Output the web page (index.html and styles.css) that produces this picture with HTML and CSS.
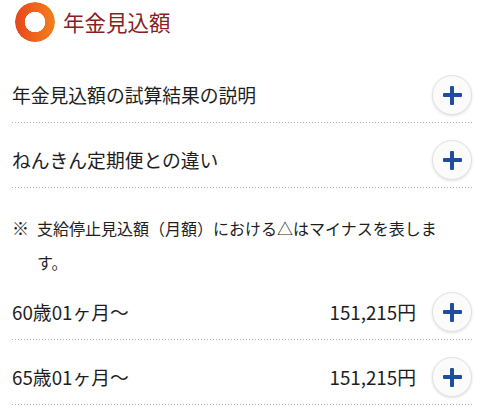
FILE: index.html
```html
<!DOCTYPE html>
<html lang="ja">
<head>
<meta charset="utf-8">
<link rel="stylesheet" href="styles.css">
</head>
<body>
<div class="page">
  <div class="header">
    <span class="ring"></span>
    <h1 class="title">年金見込額</h1>
  </div>
  <div class="row first">
    <span class="label">年金見込額の試算結果の説明</span>
    <span class="btn"><span class="plus"></span></span>
  </div>
  <div class="row">
    <span class="label">ねんきん定期便との違い</span>
    <span class="btn"><span class="plus"></span></span>
  </div>
  <p class="note"><span class="mark">※</span>支給停止見込額（月額）における△はマイナスを表します。</p>
  <div class="row amount-row">
    <span class="label">60歳01ヶ月〜</span>
    <span class="amount">151,215円</span>
    <span class="btn"><span class="plus"></span></span>
  </div>
  <div class="row">
    <span class="label">65歳01ヶ月〜</span>
    <span class="amount">151,215円</span>
    <span class="btn"><span class="plus"></span></span>
  </div>
</div>
</body>
</html>
```
FILE: styles.css
```css
html, body {
  margin: 0;
  padding: 0;
  background: #ffffff;
}
body {
  font-family: "Noto Sans CJK JP", "Noto Sans", sans-serif;
  color: #1e1e1e;
}
.page {
  display: flex;
  flex-direction: column;
  width: 480px;
  height: 408px;
  overflow: hidden;
  padding: 0 8px 0 12px;
  box-sizing: border-box;
}
.header {
  display: flex;
  align-items: center;
  height: 44px;
  padding-left: 3px;
  margin-bottom: 14px;
  flex: none;
}
.ring {
  width: 40px;
  height: 40px;
  border-radius: 50%;
  background: linear-gradient(90deg, #e5461d 0%, #ef6a1c 60%, #f07f1f 100%);
  -webkit-mask: radial-gradient(circle, transparent 10px, #000 10.5px);
  mask: radial-gradient(circle, transparent 10px, #000 10.5px);
  flex: none;
}
.title {
  margin: 0 0 0 8px;
  font-size: 21.5px;
  font-weight: 400;
  color: #8a1e22;
  line-height: 1;
}
.row {
  display: flex;
  align-items: center;
  flex: none;
  padding: 7px 0 8px 0;
  margin-top: 10px;
  background-image: linear-gradient(90deg, #b8b8b8 1px, transparent 1px);
  background-size: 3px 1px;
  background-repeat: repeat-x;
  background-position: left bottom;
}
.label {
  flex: 1;
  font-size: 18.8px;
  line-height: 1;
}
.amount {
  font-size: 18.8px;
  line-height: 1;
  margin-right: 16px;
}
.btn {
  position: relative;
  width: 40px;
  height: 40px;
  border-radius: 50%;
  background: #fbfbfb;
  border: 1px solid #e2e2e2;
  box-shadow: 0 1px 3px rgba(0,0,0,0.12);
  box-sizing: border-box;
  flex: none;
  display: flex;
  align-items: center;
  justify-content: center;
}
.plus {
  position: relative;
  width: 19px;
  height: 19px;
}
.plus::before, .plus::after {
  content: "";
  position: absolute;
  background: #1f4e9e;
  border-radius: 1px;
}
.plus::before {
  left: 0;
  top: 7.5px;
  width: 19px;
  height: 4px;
}
.plus::after {
  left: 7.5px;
  top: 0;
  width: 4px;
  height: 19px;
}
.note {
  flex: none;
  margin: 23px 30px 6px 0;
  padding-left: 25px;
  text-indent: -25px;
  font-size: 16px;
  line-height: 34px;
  color: #1e1e1e;
}
.mark {
  display: inline-block;
  width: 25px;
  text-indent: 0;
  font-size: 17px;
}
.amount-row {
  margin-top: 0;
}
```
